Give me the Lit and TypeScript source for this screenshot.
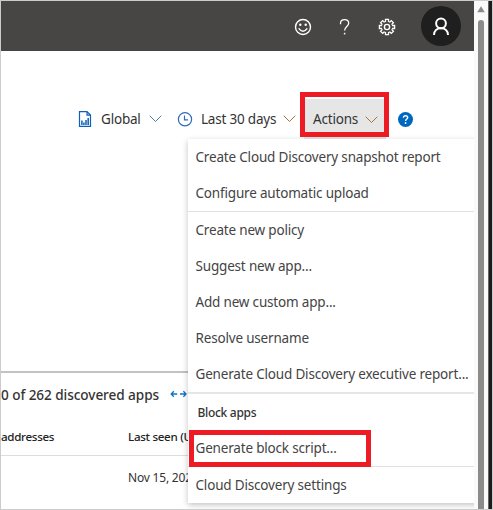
import { LitElement, html, css, svg } from "lit";
import { customElement } from "lit/decorators.js";

const chevron = html`<svg class="chev" width="13" height="8" viewBox="0 0 13 8"><path d="M.7 .7 L6.5 6.5 L12.3 .7" /></svg>`;

@customElement("actions-menu")
export class ActionsMenu extends LitElement {
  static styles = css`
    :host { display: block; background: #fff; box-shadow: 0 2px 6px rgba(0, 0, 0, 0.24); }
    .item { height: 36px; line-height: 37px; padding-left: 7.5px; white-space: nowrap; font-size: 13.5px; letter-spacing: -0.18px; color: #444; }
    .group { height: 36px; line-height: 38px; padding-left: 9.5px; font-size: 12px; letter-spacing: -0.3px; font-weight: 500; color: #333; }
    .line { height: 1px; background: #e1e1e1; }
    .line.thick { height: 2px; background: #e6e6e6; }
    .marked { position: relative; }
    .mark { position: absolute; left: 1px; top: 0; width: 182px; height: 37px; box-sizing: border-box; border: 5px solid #ed1c24; z-index: 1; }
  `;
  render() {
    return html`
      <div class="item">Create Cloud Discovery snapshot report</div>
      <div class="item">Configure automatic upload</div>
      <div class="line"></div>
      <div class="item">Create new policy</div>
      <div class="item">Suggest new app...</div>
      <div class="item">Add new custom app...</div>
      <div class="item">Resolve username</div>
      <div class="item">Generate Cloud Discovery executive report...</div>
      <div class="line thick"></div>
      <div class="group">Block apps</div>
      <div class="item marked">Generate block script...<div class="mark"></div></div>
      <div class="line"></div>
      <div class="item">Cloud Discovery settings</div>
    `;
  }
}

@customElement("app-root")
export class AppRoot extends LitElement {
  static styles = css`
    :host { display: block; width: 493px; height: 510px; overflow: hidden; box-sizing: border-box; border: 1px solid #ccc; background: #fff; font: 14px "Noto Sans", sans-serif; color: #333; }
    .shell { display: flex; height: 508px; }
    .page { width: 473px; position: relative; overflow: hidden; display: flex; flex-direction: column; }
    header { height: 50px; background: #484644; display: flex; flex: none; }
    header svg { display: block; }
    .toolbar { height: 88px; flex: none; display: grid; grid-template-columns: 77px 23px 48px 28px 24px 76px 27px 82px 12px 16px; align-items: end; white-space: nowrap; box-sizing: border-box; font-size: 13.5px; letter-spacing: -0.2px; }
    .toolbar > * { height: 40px; line-height: 41px; }
    .ico { display: flex; align-items: center; }
    .chev path { fill: none; stroke: #666; stroke-width: 1; }
    .chev { display: block; }
    .warm path { stroke: #a5743c; }
    .cool path { stroke: #4a7fa8; }
    .days-chev { padding-left: 6px; }
    .actions { background: #e6e6e6; display: grid; grid-template-columns: 52px 13px; align-items: center; position: relative; box-sizing: border-box; padding-left: 9px; }
    .mark { position: absolute; left: -4px; top: -7px; width: 89px; height: 45px; box-sizing: border-box; border: 5px solid #ed1c24; }
    .table { margin-top: 232px; border-top: 2px solid #c2c2c2; white-space: nowrap; height: 136px; }
    .title { display: grid; grid-template-columns: 169px 18px; align-items: center; height: 43px; padding-bottom: 1px; box-sizing: border-box; font-weight: 500; font-size: 13.6px; letter-spacing: -0.07px; }
    .cols { display: flex; height: 39px; line-height: 42px; font-size: 11.6px; letter-spacing: -0.3px; font-weight: 500; border-bottom: 1px solid #ddd; color: #222; }
    .row { display: flex; height: 46px; line-height: 44px; font-size: 12px; letter-spacing: -0.2px; }
    .c1 { width: 127px; }
    actions-menu { position: absolute; left: 187px; top: 138px; width: 300px; }
    .bar { width: 14px; background: #fafafa; display: flex; flex-direction: column; align-items: center; }
    .arrow { margin: 5px 0 7px; display: block; }
    .thumb { width: 6px; flex: 1; background: #8b8b8a; border-radius: 3px 3px 0 0; }
    .edge { width: 4px; box-sizing: border-box; border-left: 1px solid #666; background: #1d1d1d; }
  `;
  render() {
    const teeth = [0, 45, 90, 135, 180, 225, 270, 315];
    return html`<div class="shell">
      <div class="page">
        <header><svg width="473" height="50" viewBox="1 1 473 50" fill="none" stroke="#fff">
          <circle cx="303" cy="27" r="7.5" stroke-width="1.4" />
          <circle cx="300.3" cy="24.7" r="1.2" fill="#fff" stroke="none" /><circle cx="305.7" cy="24.7" r="1.2" fill="#fff" stroke="none" />
          <path d="M298.7 28.3 Q303 34.2 307.3 28.3" stroke-width="1.4" />
          <path d="M340.5 24.3 V23.5 C340.5 21 342.3 19.7 344.6 19.7 C347 19.7 348.7 21.2 348.7 23.3 C348.7 26.4 344.6 26.8 344.6 30.6" stroke-width="1.3" /><path d="M344.6 32.8 V34.4" stroke-width="1.5" />
          <g transform="translate(387 27)"><circle r="2.6" stroke-width="1.4" />
            ${teeth.map((a) => svg`<path transform=${`rotate(${a})`} d="M-2.2 -5.3 L-1.5 -5.6 V-7.6 H1.5 V-5.6 L2.2 -5.3" stroke-width="1.3" />`)}
          </g>
          <circle cx="441" cy="26" r="20" fill="#1f1f1f" stroke="none" />
          <circle cx="441" cy="23.3" r="4.9" stroke-width="2" /><path d="M434 35 C434.1 30.8 437 28.3 441 28.3 S447.9 30.8 448 35" stroke-width="2" />
        </svg></header>
        <div class="toolbar">
          <span></span>
          <span class="ico"><svg width="14" height="16" viewBox="0 0 14 16" fill="none" stroke="#1060b8"><path d="M1.5 .6 H9 L12.5 4.1 V15.4 H1.5 Z M9 .6 V4.1 H12.5" stroke-width="1.2" /><path d="M3.9 14 V9.5 M5.9 14 V11.5 M8 14 V9 M10.2 14 V7" stroke-width="1.5" /></svg></span>
          <span>Global</span>
          <span class="ico cool">${chevron}</span>
          <span class="ico"><svg width="16" height="16" viewBox="0 -.5 16 16" fill="none" stroke="#2e6cba" stroke-width="1.2"><circle cx="8" cy="7.8" r="6.6" /><path d="M7.5 4 V8.3 H11" /></svg></span>
          <span>Last 30 days</span>
          <span class="ico warm days-chev">${chevron}</span>
          <div class="actions warm"><span>Actions</span>${chevron}<div class="mark"></div></div>
          <span></span>
          <span class="ico"><svg width="15" height="15" viewBox="0 0 15 15"><circle cx="7.5" cy="7.5" r="7.5" fill="#0067c0" /><path d="M5.4 5.8 C5.4 4.5 6.3 3.8 7.5 3.8 C8.8 3.8 9.7 4.5 9.7 5.6 C9.7 7 7.6 7.1 7.6 8.9" fill="none" stroke="#fff" stroke-width="1.4" /><circle cx="7.6" cy="11" r=".9" fill="#fff" /></svg></span>
        </div>
        <div class="table">
          <div class="title"><span>0 of 262 discovered apps</span><svg width="18" height="8" viewBox="0 0 18 8" fill="none" stroke="#0a74c9" stroke-width="1.3"><path d="M1.2 4 H7.2 M3.8 1.3 L1.2 4 L3.8 6.7 M10 4 H16 M13.4 1.3 L16 4 L13.4 6.7" /></svg></div>
          <div class="cols"><span class="c1">addresses</span><span>Last seen (UTC)</span></div>
          <div class="row"><span class="c1"></span><span>Nov 15, 2022</span></div>
        </div>
        <actions-menu></actions-menu>
      </div>
      <div class="bar"><svg class="arrow" width="8" height="7" viewBox="0 0 8 7"><path d="M4 .3 L7.8 6.3 H.2 Z" fill="#8b8b8a" /></svg><div class="thumb"></div></div>
      <div class="edge"></div>
    </div>`;
  }
}
